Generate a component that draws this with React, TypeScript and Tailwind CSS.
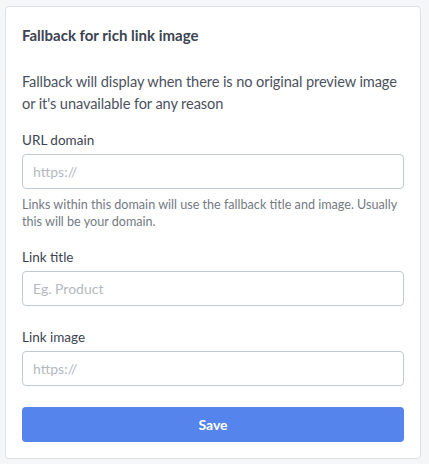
export default function App() {
  return (
    <div className="min-h-[464px] w-[429px] bg-[#f5f6f8] pt-[6px] pl-[5px] font-['Lato','Noto_Sans',sans-serif] text-[#3c4451]">
      <div className="w-[416px] rounded-[4px] border border-[#dde1e6] bg-white px-[16px] pt-[18px] pb-[16px]">
        <h2 className="text-[15px] font-bold leading-[20px] text-[#3c4451]">Fallback for rich link image</h2>

        <p className="mt-[26px] text-[14.6px] leading-[21.5px] tracking-[-0.1px] text-[#4a5260]">
          Fallback will display when there is no original preview image or it's unavailable for any reason
        </p>

        <label className="mt-[17px] block text-[13.5px] leading-[18px]">URL domain</label>
        <input
          className="mt-[5px] block h-[35px] w-full rounded-[4px] border border-[#c3c9d2] px-[10px] text-[14px] placeholder:text-[#b4b9c0] outline-none"
          placeholder="https://"
        />
        <p className="mt-[7px] text-[12.6px] leading-[17px] text-[#747a83]">
          Links within this domain will use the fallback title and image. Usually this will be your domain.
        </p>

        <label className="mt-[18px] block text-[13.5px] leading-[18px]">Link title</label>
        <input
          className="mt-[5px] block h-[35px] w-full rounded-[4px] border border-[#c3c9d2] px-[10px] text-[14px] placeholder:text-[#b4b9c0] outline-none"
          placeholder="Eg. Product"
        />

        <label className="mt-[22px] block text-[13.5px] leading-[18px]">Link image</label>
        <input
          className="mt-[5px] block h-[35px] w-full rounded-[4px] border border-[#c3c9d2] px-[10px] text-[14px] placeholder:text-[#b4b9c0] outline-none"
          placeholder="https://"
        />

        <button className="mt-[21px] block h-[35px] w-full rounded-[4px] bg-[#5584ec] text-[14px] font-bold text-white">
          Save
        </button>
      </div>
    </div>
  );
}
